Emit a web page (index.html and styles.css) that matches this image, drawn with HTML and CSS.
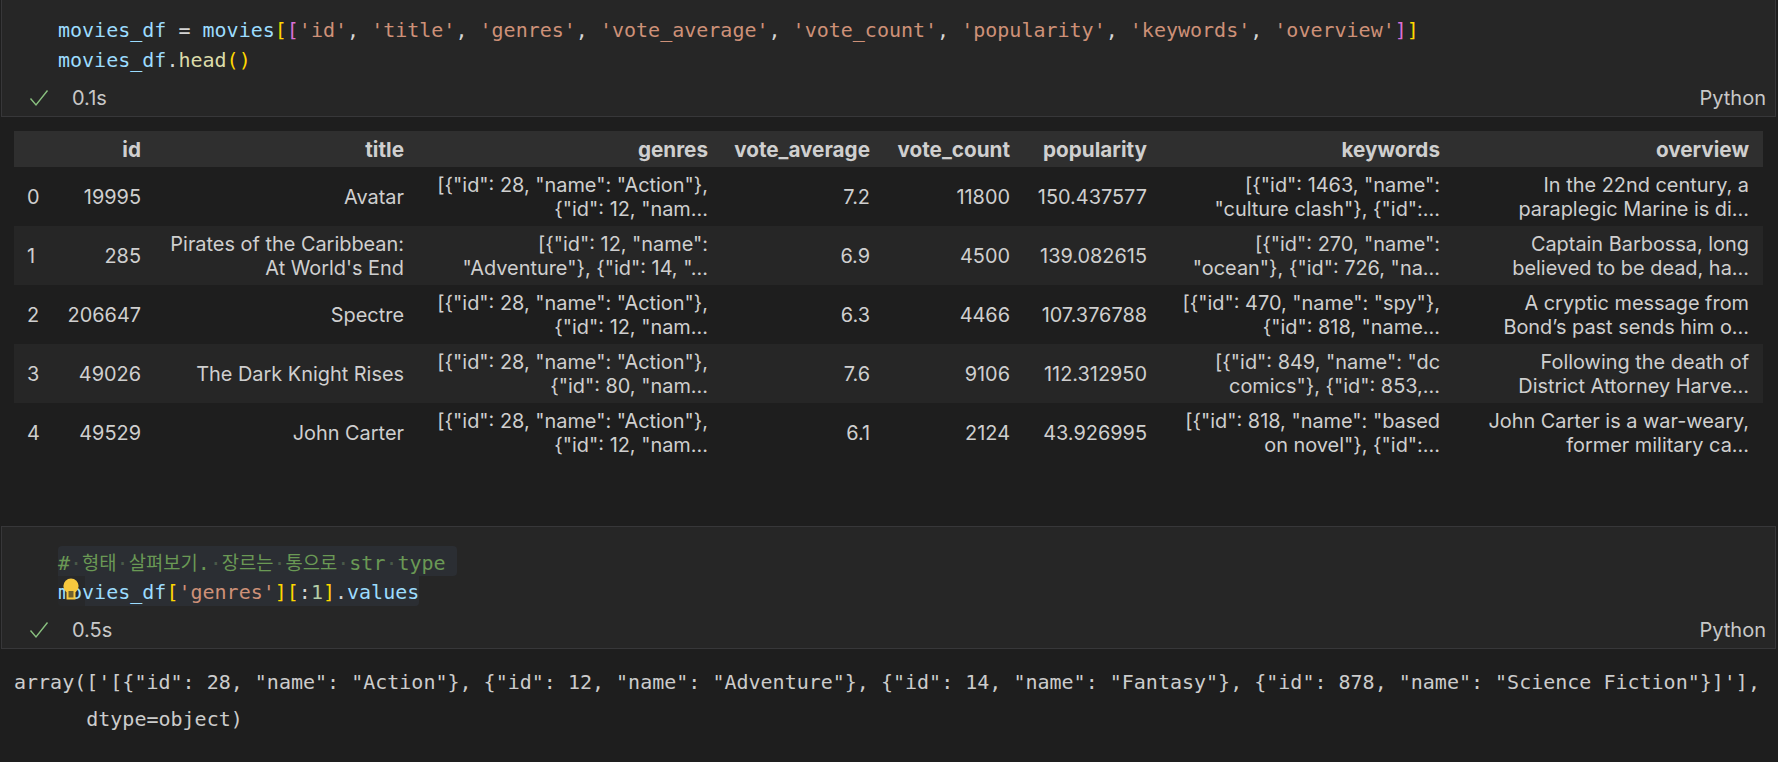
FILE: index.html
```html
<!DOCTYPE html>
<html lang="en">
<head>
<meta charset="utf-8">
<title>movies notebook</title>
<link rel="stylesheet" href="styles.css">
</head>
<body>
<section class="cell first">
  <div class="code">
    <div class="line"><span class="var">movies_df</span> <span class="op">=</span> <span class="var">movies</span><span class="yel">[</span><span class="pur">[</span><span class="str">'id'</span><span class="op">, </span><span class="str">'title'</span><span class="op">, </span><span class="str">'genres'</span><span class="op">, </span><span class="str">'vote_average'</span><span class="op">, </span><span class="str">'vote_count'</span><span class="op">, </span><span class="str">'popularity'</span><span class="op">, </span><span class="str">'keywords'</span><span class="op">, </span><span class="str">'overview'</span><span class="pur">]</span><span class="yel">]</span></div>
    <div class="line"><span class="var">movies_df</span><span class="op">.</span><span class="fn">head</span><span class="yel">()</span></div>
  </div>
  <div class="status">
    <svg class="check" viewBox="0 0 20 18" width="20" height="18"><path d="M1.5 9.5 L7 16 L18.5 1.5"/></svg>
    <span class="time">0.1s</span>
    <span class="lang">Python</span>
  </div>
</section>

<div class="output-table">
<table class="df">
  <colgroup><col class="c-idx"><col class="c-id"><col class="c-title"><col class="c-genres"><col class="c-avg"><col class="c-count"><col class="c-pop"><col class="c-kw"><col class="c-ov"></colgroup>
  <thead>
    <tr><th></th><th>id</th><th>title</th><th>genres</th><th>vote_average</th><th>vote_count</th><th>popularity</th><th>keywords</th><th>overview</th></tr>
  </thead>
  <tbody>
    <tr><th>0</th><td>19995</td><td>Avatar</td><td>[{"id": 28, "name": "Action"},<br>{"id": 12, "nam...</td><td>7.2</td><td>11800</td><td>150.437577</td><td>[{"id": 1463, "name":<br>"culture clash"}, {"id":...</td><td>In the 22nd century, a<br>paraplegic Marine is di...</td></tr>
    <tr><th>1</th><td>285</td><td>Pirates of the Caribbean:<br>At World's End</td><td>[{"id": 12, "name":<br>"Adventure"}, {"id": 14, "...</td><td>6.9</td><td>4500</td><td>139.082615</td><td>[{"id": 270, "name":<br>"ocean"}, {"id": 726, "na...</td><td>Captain Barbossa, long<br>believed to be dead, ha...</td></tr>
    <tr><th>2</th><td>206647</td><td>Spectre</td><td>[{"id": 28, "name": "Action"},<br>{"id": 12, "nam...</td><td>6.3</td><td>4466</td><td>107.376788</td><td>[{"id": 470, "name": "spy"},<br>{"id": 818, "name...</td><td>A cryptic message from<br>Bond’s past sends him o...</td></tr>
    <tr><th>3</th><td>49026</td><td>The Dark Knight Rises</td><td>[{"id": 28, "name": "Action"},<br>{"id": 80, "nam...</td><td>7.6</td><td>9106</td><td>112.312950</td><td>[{"id": 849, "name": "dc<br>comics"}, {"id": 853,...</td><td>Following the death of<br>District Attorney Harve...</td></tr>
    <tr><th>4</th><td>49529</td><td>John Carter</td><td>[{"id": 28, "name": "Action"},<br>{"id": 12, "nam...</td><td>6.1</td><td>2124</td><td>43.926995</td><td>[{"id": 818, "name": "based<br>on novel"}, {"id":...</td><td>John Carter is a war-weary,<br>former military ca...</td></tr>
  </tbody>
</table>
</div>

<section class="cell second">
  <div class="code">
    <div class="line"><span class="sel sel-a"><span class="cmt">#<i class="ws">·</i><span class="ko">형태</span><i class="ws">·</i><span class="ko">살펴보기</span>.<i class="ws">·</i><span class="ko">장르는</span><i class="ws">·</i><span class="ko">통으로</span><i class="ws">·</i>str<i class="ws">·</i>type</span></span></div>
    <div class="line"><span class="sel sel-b"><span class="var">movies_df</span><span class="yel">[</span><span class="str">'genres'</span><span class="yel">]</span><span class="yel">[</span><span class="op">:</span><span class="num">1</span><span class="yel">]</span><span class="op">.</span><span class="var">values</span></span><svg class="bulb" viewBox="0 0 16 22" width="16" height="22"><circle cx="8" cy="8" r="7.6"/><path class="stem" d="M4.5 13 V20.5 H11.5 V13"/></svg></div>
  </div>
  <div class="status">
    <svg class="check" viewBox="0 0 20 18" width="20" height="18"><path d="M1.5 9.5 L7 16 L18.5 1.5"/></svg>
    <span class="time">0.5s</span>
    <span class="lang">Python</span>
  </div>
</section>

<pre class="stream">array(['[{"id": 28, "name": "Action"}, {"id": 12, "name": "Adventure"}, {"id": 14, "name": "Fantasy"}, {"id": 878, "name": "Science Fiction"}]'],
      dtype=object)</pre>
</body>
</html>
```

FILE: styles.css
```css
html, body {
  margin: 0;
  padding: 0;
  background: #1e1e1e;
  height: 762px;
  overflow: hidden;
}

body {
  display: flex;
  flex-direction: column;
  color: #cccccc;
  font-family: Inter, "Liberation Sans", sans-serif;
}

.cell {
  margin: 0 2px 0 1px;
  background: #262626;
  border: 1px solid #373739;
}

.cell.first {
  border-top: 0;
}

.cell.first .code {
  padding-top: 14px;
}

.cell.second {
  margin-top: 64px;
}

.code {
  padding: 19px 0 0 56px;
  font-family: "DejaVu Sans Mono", "Liberation Mono", monospace;
  font-size: 20px;
  line-height: 32px;
}

.line {
  height: 30px;
  position: relative;
  white-space: pre;
}

.var { color: #9cdcfe; }
.op { color: #d4d4d4; }
.str { color: #ce9178; }
.fn { color: #dcdcaa; }
.num { color: #b5cea8; }
.cmt { color: #6a9955; }
.yel { color: #ffd700; }
.pur { color: #da70d6; }

.ws {
  font-style: normal;
  color: #4a5a4a;
}

.ko {
  font-family: "Noto Sans CJK KR", sans-serif;
  font-size: 18.75px;
}

.sel {
  display: inline-block;
  height: 30px;
  vertical-align: top;
  background: #2b2e33;
}

.sel-a {
  padding-right: 11px;
  border-radius: 4px 4px 4px 0;
}

.sel-b {
  border-radius: 0 0 4px 4px;
  background: linear-gradient(90deg, #27282a 27px, #2b2e33 27px);
}

.bulb {
  position: absolute;
  left: 5px;
  top: 2px;
  fill: #f7c93e;
}

.stem {
  fill: #6f6130;
  stroke: #f7c93e;
  stroke-width: 2;
}

.status {
  display: flex;
  align-items: center;
  box-sizing: border-box;
  height: 42px;
  padding: 5px 9px 0 27px;
  font-size: 20px;
}

.check {
  fill: none;
  stroke: #89c07f;
  stroke-width: 1.4;
  margin-right: 23px;
}

.time {
  color: #c8c8c8;
}

.lang {
  margin-left: auto;
  color: #c8c8c8;
}

.output-table {
  padding: 14px 0 0 14px;
}

.df {
  width: 1749px;
  table-layout: fixed;
  border-collapse: collapse;
  font-size: 19.9px;
  line-height: 23.5px;
  color: #cfcfcf;
}

.c-idx { width: 40px; }
.c-id { width: 101px; }
.c-title { width: 263px; }
.c-genres { width: 304px; }
.c-avg { width: 162px; }
.c-count { width: 140px; }
.c-pop { width: 137px; }
.c-kw { width: 293px; }
.c-ov { width: 309px; }

.df thead tr {
  height: 36px;
  background: #2f2f2f;
}

.df tbody tr {
  height: 59px;
}

.df tbody tr:nth-child(even) {
  background: #262626;
}

.df th,
.df td {
  padding: 2px 14px 0 0;
  text-align: right;
  vertical-align: middle;
}

.df thead th {
  font-size: 20.7px;
  font-weight: 700;
}

.df tbody th {
  font-weight: 400;
  text-align: left;
  padding-left: 13px;
}

.stream {
  margin: 0;
  padding: 15px 0 0 14px;
  font-family: "DejaVu Sans Mono", "Liberation Mono", monospace;
  font-size: 20px;
  line-height: 37px;
  color: #cccccc;
}
```
